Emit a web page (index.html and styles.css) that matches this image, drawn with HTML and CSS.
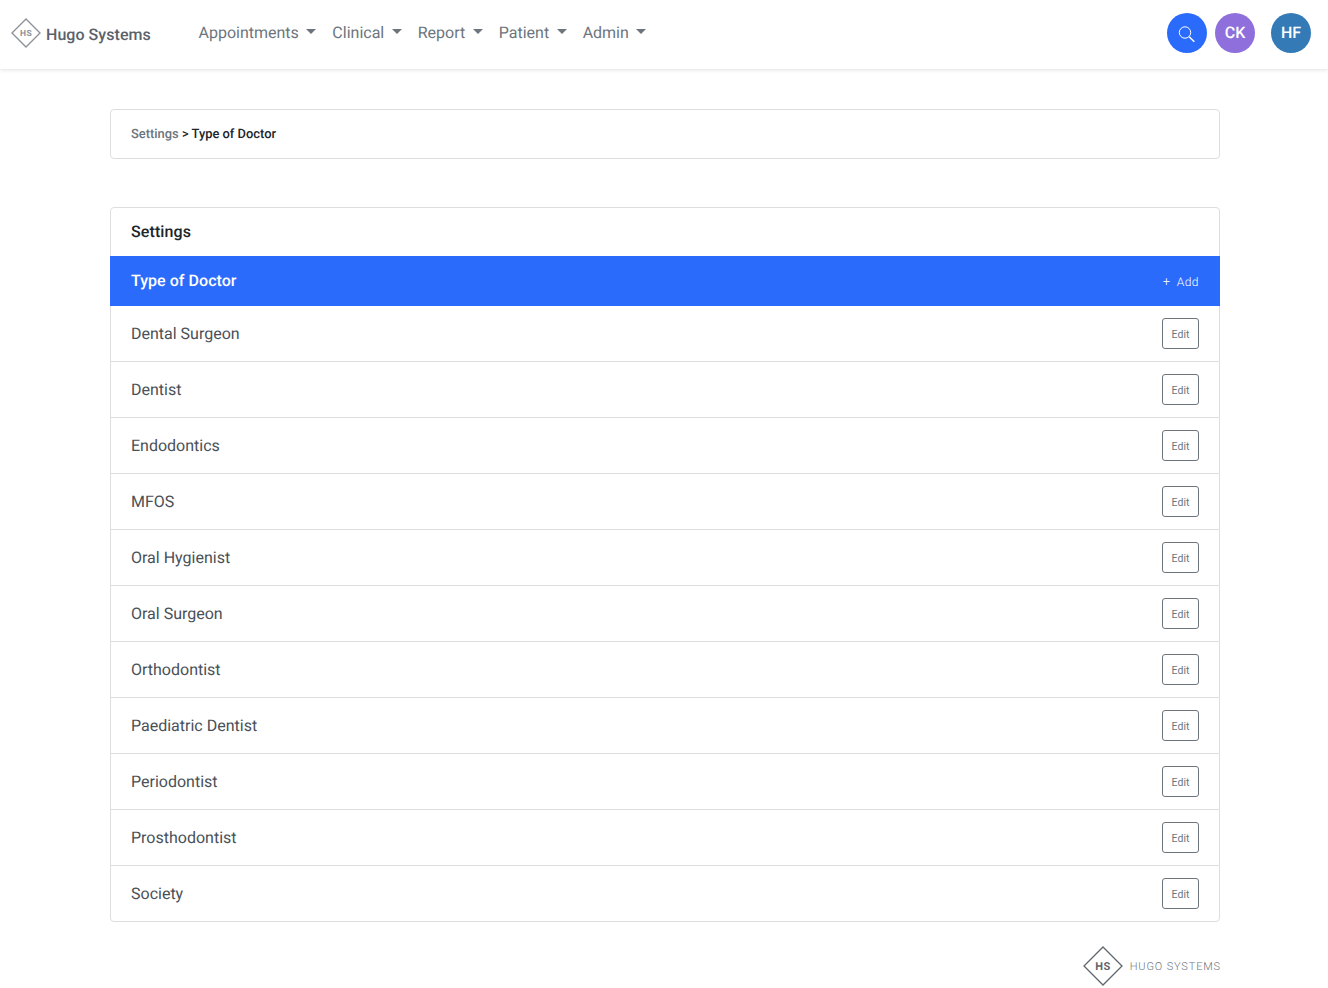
FILE: index.html
```html
<!DOCTYPE html>
<html lang="en">
<head>
<meta charset="utf-8">
<title>Type of Doctor</title>
<link rel="stylesheet" href="styles.css">
</head>
<body>
<header class="topbar">
  <a class="brand">
    <svg class="brand-logo" width="30" height="30" viewBox="0 0 30 30"><path d="M15 1 29 15 15 29 1 15Z" fill="none" stroke="#8d9399" stroke-width="1.4"/><text x="15" y="18" text-anchor="middle" class="logo-text-sm">HS</text></svg>
    <span class="brand-name">Hugo Systems</span>
  </a>
  <nav class="menu">
    <a class="menu-item">Appointments<i class="caret"></i></a>
    <a class="menu-item">Clinical<i class="caret"></i></a>
    <a class="menu-item">Report<i class="caret"></i></a>
    <a class="menu-item">Patient<i class="caret"></i></a>
    <a class="menu-item">Admin<i class="caret"></i></a>
  </nav>
  <div class="actions">
    <span class="circle blue"><svg class="search-icon" width="18" height="18" viewBox="0 0 18 18" fill="none" stroke="#fff"><circle cx="7" cy="7.5" r="5.7" stroke-width="1"/><path d="M11.2 11.7l5.1 5.1" stroke-width="1.5"/></svg></span>
    <span class="circle purple">CK</span>
    <span class="circle steel">HF</span>
  </div>
</header>
<main class="page">
  <div class="crumb"><span class="crumb-muted">Settings</span> &gt; Type of Doctor</div>
  <section class="panel">
    <h2 class="panel-title">Settings</h2>
    <div class="band"><strong class="band-title">Type of Doctor</strong><span class="band-add"><span class="plus">+</span>Add</span></div>
    <ul class="rows">
      <li class="row"><span>Dental Surgeon</span><button class="edit">Edit</button></li>
      <li class="row"><span>Dentist</span><button class="edit">Edit</button></li>
      <li class="row"><span>Endodontics</span><button class="edit">Edit</button></li>
      <li class="row"><span>MFOS</span><button class="edit">Edit</button></li>
      <li class="row"><span>Oral Hygienist</span><button class="edit">Edit</button></li>
      <li class="row"><span>Oral Surgeon</span><button class="edit">Edit</button></li>
      <li class="row"><span>Orthodontist</span><button class="edit">Edit</button></li>
      <li class="row"><span>Paediatric Dentist</span><button class="edit">Edit</button></li>
      <li class="row"><span>Periodontist</span><button class="edit">Edit</button></li>
      <li class="row"><span>Prosthodontist</span><button class="edit">Edit</button></li>
      <li class="row"><span>Society</span><button class="edit">Edit</button></li>
    </ul>
  </section>
  <footer class="foot">
    <svg width="40" height="40" viewBox="0 0 40 40"><path d="M20 1 39 20 20 39 1 20Z" fill="none" stroke="#5f666d" stroke-width="1.3"/><text x="20" y="24" text-anchor="middle" class="logo-text-lg">HS</text></svg>
    <span class="foot-name">HUGO SYSTEMS</span>
  </footer>
</main>
</body>
</html>
```

FILE: styles.css
```css
* { box-sizing: border-box; }
html, body { margin: 0; padding: 0; }
body { background: #fff; font-family: Roboto, "Liberation Sans", sans-serif; color: #495057; height: 988px; overflow: hidden; text-rendering: geometricPrecision; }
.topbar { height: 69px; background: #fff; box-shadow: 0 1px 4px rgba(0,0,0,.12); display: flex; align-items: center; padding: 0 17px 3px 11px; }
.brand { display: flex; align-items: center; gap: 5px; width: 180px; margin-top: 3px; }
.brand-logo { display: block; margin-top: -3px; }
.brand-name { font-size: 16px; font-weight: 500; color: #5b626a; letter-spacing: .05px; }
.logo-text-sm { font: 700 8.5px Roboto, sans-serif; fill: #8d9399; letter-spacing: .5px; }
.logo-text-lg { font: 700 11px Roboto, sans-serif; fill: #5f666d; letter-spacing: .6px; }
.menu { display: flex; align-items: center; margin-left: -.5px; }
.menu-item { font-size: 16px; line-height: 24px; color: #6c757d; padding: 0 8px; display: flex; align-items: center; }
.caret { flex: none; width: 10px; height: 5px; margin-left: 7.5px; margin-top: -3px; border-top: 5px solid #6c757d; border-left: 5px solid transparent; border-right: 5px solid transparent; }
.actions { margin-left: auto; display: flex; align-items: center; gap: 8px; }
.circle { width: 40px; height: 40px; border-radius: 50%; display: flex; align-items: center; justify-content: center; color: #fff; font-size: 16px; font-weight: 500; padding-bottom: 2px; }
.blue { background: #2b6bfc; padding-bottom: 0; }
.search-icon { margin-top: 2px; }
.purple { background: #8e6fdc; }
.steel { background: #337ab7; margin-left: 8px; }
.page { width: 1110px; margin: 40px 0 0 110px; }
.crumb { height: 50px; border: 1px solid #dcdee0; border-radius: 4px; padding: 2px 20px 0; line-height: 46px; font-size: 12.9px; font-weight: 500; color: #212529; }
.crumb-muted { color: #6c757d; }
.panel { margin-top: 48px; border: 1px solid #dcdee0; border-radius: 4px; }
.panel-title { margin: 0; height: 48px; padding: 0 20px 2px; display: flex; align-items: center; font-size: 16px; font-weight: 500; color: #212529; letter-spacing: .1px; }
.band { height: 50px; margin: 0 -1px; background: #2b6bfc; color: #fff; display: flex; align-items: center; justify-content: space-between; padding: 0 21px; }
.band-title { font-size: 16px; font-weight: 500; margin-top: -2px; letter-spacing: .04px; }
.band-add { font-size: 12px; font-weight: 300; letter-spacing: .5px; display: flex; align-items: center; margin-top: 2px; }
.plus { margin-right: 6px; font-weight: 300; font-size: 13px; }
.rows { list-style: none; margin: 0; padding: 0; }
.row { height: 56px; padding: 0 20px; display: flex; align-items: center; justify-content: space-between; font-size: 16px; color: #495057; border-top: 1px solid #dcdee0; }
.row:first-child { border-top: 0; height: 55px; }
.edit { width: 37px; height: 31px; padding: 1px 0 0; background: #fff; border: 1px solid #6c757d; border-radius: 3px; font: 400 10.5px Roboto, sans-serif; color: #6c757d; }
.foot { display: flex; align-items: center; justify-content: flex-end; gap: 7px; margin-top: 24px; margin-right: -1px; }
.foot-name { font-size: 11px; font-weight: 300; color: #6c757d; letter-spacing: .85px; }
```
